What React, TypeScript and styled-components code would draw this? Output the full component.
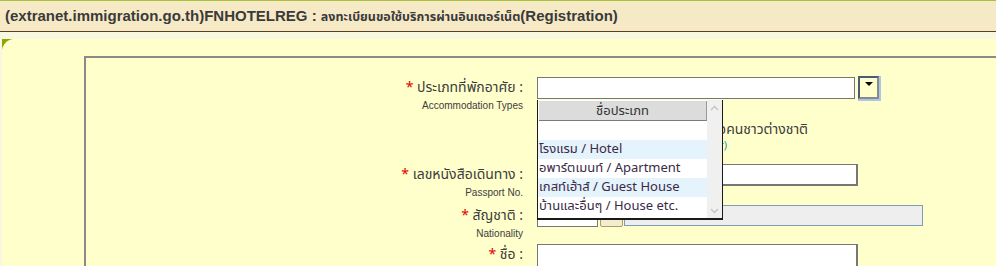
import * as React from 'react';
import styled, { createGlobalStyle } from 'styled-components';

const GlobalStyle = createGlobalStyle`
  html, body {
    margin: 0;
    padding: 0;
    overflow: hidden;
    background: #f8f8e0;
  }
  body {
    font-family: Tahoma, 'Noto Sans Thai', 'Noto Sans', 'DejaVu Sans', sans-serif;
    color: #333333;
  }
`;

const THAI = `Tahoma, 'Noto Sans Thai', 'Noto Sans', 'DejaVu Sans', sans-serif`;

const types = [
  'โรงแรม / Hotel',
  'อพาร์ตเมนท์ / Apartment',
  'เกสท์เฮ้าส์ / Guest House',
  'บ้านและอื่นๆ / House etc.',
];

export default function App() {
  return (
    <Page>
      <GlobalStyle />
      <Header>
        (extranet.immigration.go.th)FNHOTELREG : <HeaderThai>ลงทะเบียนขอใช้บริการผ่านอินเตอร์เน็ต</HeaderThai>(Registration)
      </Header>
      <Strip />
      <Content>
        <Corner width="11" height="11" viewBox="0 0 11 11">
          <path d="M0 0 H11 C5 1 1 5 0 11 Z" fill="#8aa800" />
        </Corner>
        <Panel>
          <Row $h={44}>
            <Label>
              <Main><Star>*</Star> ประเภทที่พักอาศัย :</Main>
              <Sub>Accommodation Types</Sub>
            </Label>
            <Field>
              <TextBox $w={318} />
              <DropButton>
                <svg width="8" height="5" viewBox="0 0 8 5">
                  <path d="M0 0 H8 L4 4 Z" fill="#000" />
                </svg>
              </DropButton>
              <Popup>
                <ListHead>ชื่อประเภท</ListHead>
                <Scroll>
                  <svg width="9" height="6" viewBox="0 0 9 6">
                    <path d="M1 5 L4.5 1.5 L8 5" stroke="#c4c4c4" strokeWidth="1.4" fill="none" />
                  </svg>
                  <svg width="9" height="6" viewBox="0 0 9 6">
                    <path d="M1 1 L4.5 4.5 L8 1" stroke="#c4c4c4" strokeWidth="1.4" fill="none" />
                  </svg>
                </Scroll>
                <List>
                  <Item $alt={false}>&nbsp;</Item>
                  {types.map((t, i) => (
                    <Item key={t} $alt={i % 2 === 0}>{t}</Item>
                  ))}
                </List>
              </Popup>
            </Field>
          </Row>
          <Row $h={43}>
            <Label />
            <Field>
              <Info>
                <InfoText>ผู้ให้เช่าที่พักคือคนชาวต่างชาติ</InfoText>
                <InfoNote>(Owner is foreigner)</InfoNote>
              </Info>
            </Field>
          </Row>
          <Row $h={41}>
            <Label>
              <Main><Star>*</Star> เลขหนังสือเดินทาง :</Main>
              <Sub>Passport No.</Sub>
            </Label>
            <Field>
              <TextBox $w={321} $thick />
            </Field>
          </Row>
          <Row $h={39}>
            <Label>
              <Main><Star>*</Star> สัญชาติ :</Main>
              <Sub>Nationality</Sub>
            </Label>
            <Field>
              <TextBox $w={61} />
              <LookupButton>
                <svg width="14" height="8" viewBox="0 0 14 8">
                  <path d="M1 1 H7 L4 6 Z" fill="#2a5fd0" />
                  <path d="M9 2 H13 L11 5 Z" fill="#d23a1a" />
                </svg>
              </LookupButton>
              <ReadOnlyBox />
            </Field>
          </Row>
          <Row $h={40}>
            <Label>
              <Main><Star>*</Star> ชื่อ :</Main>
            </Label>
            <Field>
              <TextBox $w={321} $thick $tall />
            </Field>
          </Row>
        </Panel>
      </Content>
    </Page>
  );
}

const Page = styled.div`
  width: 996px;
  height: 266px;
  overflow: hidden;
  border-top: 1px solid #a6c23a;
  box-sizing: border-box;
`;

const Header = styled.div`
  height: 30px;
  line-height: 30px;
  padding-left: 5px;
  background: #f6eac6;
  border-bottom: 1px solid #5a4020;
  font-family: 'Liberation Sans', Arial, ${THAI};
  font-weight: bold;
  font-size: 15px;
  color: #3a3a3a;
  white-space: nowrap;
`;

const HeaderThai = styled.span`
  font-family: ${THAI};
  font-size: 12.5px;
`;

const Strip = styled.div`
  height: 7px;
  background: #f8f8e0;
`;

const Content = styled.div`
  position: relative;
  margin-left: 2px;
  background: #ffffcc;
  padding: 17px 0 0 82px;
  height: 300px;
`;

const Corner = styled.svg`
  position: absolute;
  left: 0;
  top: 0;
`;

const Panel = styled.div`
  width: 1000px;
  height: 400px;
  border-top: 2px solid #8a8a8a;
  border-left: 2px solid #8a8a8a;
  padding-top: 19px;
  box-sizing: border-box;
`;

const Row = styled.div<{ $h: number }>`
  display: flex;
  height: ${p => p.$h}px;
`;

const Label = styled.div`
  width: 437px;
  padding-right: 14px;
  display: flex;
  flex-direction: column;
  align-items: flex-end;
  font-family: ${THAI};
`;

const Main = styled.div`
  height: 22px;
  line-height: 22px;
  font-size: 14px;
  color: #3c3c3c;
  white-space: nowrap;
`;

const Star = styled.span`
  color: #e00000;
`;

const Sub = styled.div`
  font-family: 'Liberation Sans', Arial, sans-serif;
  font-size: 10px;
  line-height: 13px;
  color: #3c3c3c;
`;

const Field = styled.div`
  position: relative;
  display: flex;
  align-items: flex-start;
`;

const TextBox = styled.div<{ $w: number; $thick?: boolean; $tall?: boolean }>`
  width: ${p => p.$w}px;
  height: ${p => (p.$tall ? 30 : 22)}px;
  box-sizing: border-box;
  background: #ffffff;
  border: 1px solid #777777;
  border-right-width: ${p => (p.$thick ? 2 : 1)}px;
  border-bottom-width: ${p => (p.$thick ? 2 : 1)}px;
`;

const DropButton = styled.div`
  margin-left: 3px;
  margin-top: -1px;
  width: 21px;
  height: 23px;
  box-sizing: border-box;
  border: 2px solid #4a5a78;
  border-right-color: #8a8a8a;
  border-bottom-color: #8a8a8a;
  background: #ffffcc;
  box-shadow: 1px 1px 0 1px #a9c8ec;
  display: flex;
  justify-content: center;
  padding-top: 4px;
`;

const Popup = styled.div`
  position: absolute;
  left: 0;
  top: 23px;
  width: 186px;
  height: 120px;
  box-sizing: border-box;
  background: #ffffff;
  border: 1px solid #1a1a1a;
  border-top: none;
  border-bottom-width: 2px;
  z-index: 5;
  font-family: ${THAI};
`;

const ListHead = styled.div`
  margin: 1px 0 0 1px;
  width: 168px;
  height: 20px;
  box-sizing: border-box;
  background: #dcdcdc;
  border-right: 1px solid #9a9a9a;
  border-bottom: 1px solid #7a7a7a;
  text-align: center;
  font-size: 13px;
  line-height: 20px;
  color: #333333;
`;

const Scroll = styled.div`
  position: absolute;
  right: 0;
  top: 0;
  bottom: 0;
  width: 15px;
  background: #f0f0f0;
  display: flex;
  flex-direction: column;
  justify-content: space-between;
  align-items: center;
  padding: 5px 0 4px;
  box-sizing: border-box;
`;

const List = styled.div`
  width: 169px;
`;

const Item = styled.div<{ $alt: boolean }>`
  height: 19px;
  line-height: 19px;
  padding-left: 1px;
  font-size: 13px;
  color: #3a2a48;
  background: ${p => (p.$alt ? '#e5f3fc' : '#ffffff')};
  white-space: nowrap;
`;

const Info = styled.div`
  width: 271px;
  font-family: ${THAI};
  text-align: right;
  white-space: nowrap;
  overflow: hidden;
`;

const InfoText = styled.div`
  font-size: 14px;
  line-height: 18px;
  color: #3c3c3c;
`;

const InfoNote = styled.div`
  font-size: 11px;
  line-height: 14px;
  color: #22a0a0;
  padding-right: 81px;
`;

const LookupButton = styled.div`
  margin: 1px 1px 0 2px;
  width: 23px;
  height: 21px;
  box-sizing: border-box;
  background: #f4eccf;
  border: 1px solid #a89c78;
  border-radius: 2px;
  display: flex;
  align-items: center;
  justify-content: center;
`;

const ReadOnlyBox = styled.div`
  width: 299px;
  height: 21px;
  box-sizing: border-box;
  background: #eeeeee;
  border: 1px solid #7f9db9;
`;
